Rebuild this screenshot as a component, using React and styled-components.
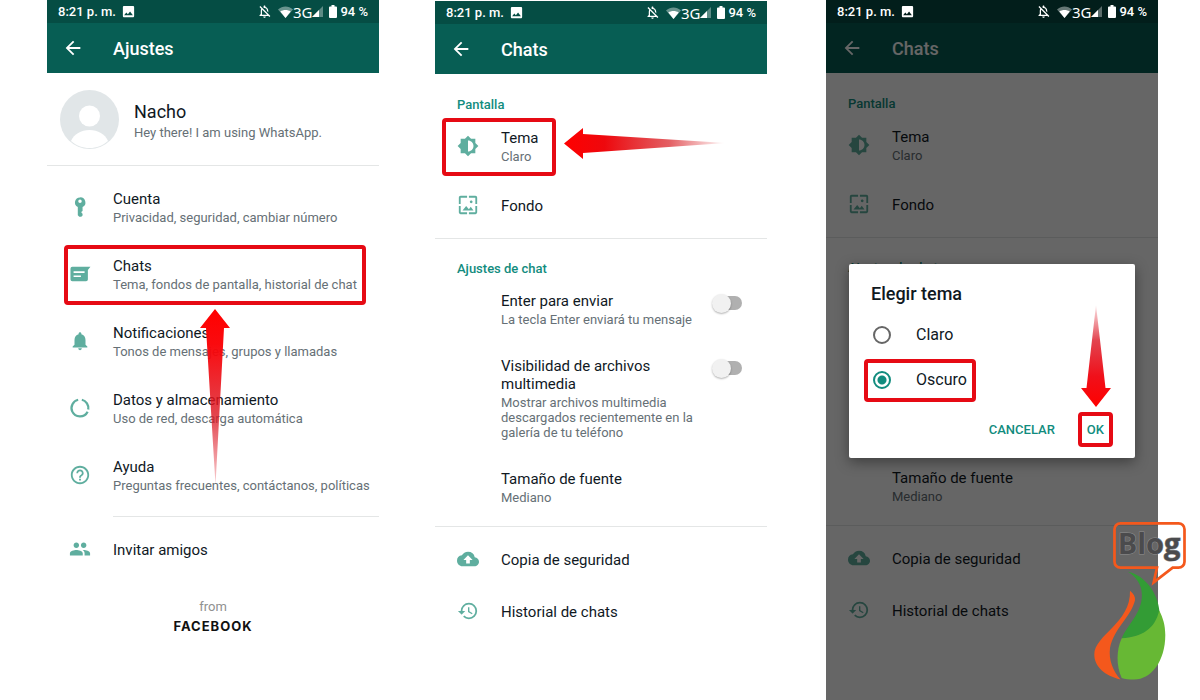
// React
import React, { useState } from 'react'

// Styled components
import styled, { createGlobalStyle, css } from 'styled-components'

// Icons
import {
  MdArrowBack,
  MdBackup,
  MdBrightness6,
  MdHelpOutline,
  MdHistory,
  MdImage,
  MdNotifications,
  MdOutlineNotificationsOff,
  MdPeople,
  MdWallpaper
} from 'react-icons/md'


const KeyIcon = () => (
  <svg viewBox="0 0 24 24" fill="currentColor">
    <path fillRule="evenodd" d="M12 1.500a5.600 5.600 0 0 0-2.400 10.600V21l1.600 1.700h2.200l1.400-1.400v-2l-1.200-1v-1l1.200-1v-4.200A5.600 5.600 0 0 0 12 1.500zm0 2.300a1.900 1.900 0 1 1 0 3.800 1.900 1.900 0 0 1 0-3.800z" />
  </svg>
)

const ChatIcon = () => (
  <svg viewBox="0 0 24 24" fill="currentColor">
    <path fillRule="evenodd" d="M3.600 4.200h19.800l-2.800 3.400V18a2 2 0 0 1-2 2H3.600a2 2 0 0 1-2-2V6.200a2 2 0 0 1 2-2zM5 9v1.800h12V9zM5 13.600v1.800h8v-1.800z" />
  </svg>
)

const DataIcon = () => (
  <svg viewBox="0 0 24 24" fill="none" stroke="currentColor" strokeWidth="2.500">
    <path d="M14 3a9.300 9.300 0 0 1 7 10.600M20.300 16a9.300 9.300 0 0 1-16.800-.3A9.300 9.300 0 0 1 10 3" />
  </svg>
)

const WifiIcon = () => (
  <svg width="15" height="12" viewBox="0 0 15 12" fill="#fff">
    <path opacity=".4" d="M0 3.500C4.500-.5 10.500-.5 15 3.500L7.500 12z" />
    <path d="M2.300 5.600c3.200-2 7.200-2 10.400 0L7.500 12z" />
  </svg>
)

const SignalIcon = () => (
  <svg width="11" height="11" viewBox="0 0 11 11" fill="#fff">
    <path opacity=".35" d="M11 0v11H0z" />
    <path d="M7 4v7H0z" />
  </svg>
)

const BatteryIcon = () => (
  <svg width="8" height="13" viewBox="0 0 8 13" fill="#fff">
    <path d="M2.500 0h3v1.500H7a1 1 0 0 1 1 1V12a1 1 0 0 1-1 1H1a1 1 0 0 1-1-1V2.500a1 1 0 0 1 1-1h1.500z" />
  </svg>
)

const PersonIcon = () => (
  <svg width="59" height="59" viewBox="0 0 59 59">
    <circle cx="29.500" cy="29.500" r="29.500" fill="#e1e6e8" />
    <circle cx="29.500" cy="26" r="10.500" fill="#fff" />
    <path d="M11 51c3-7 10-11 18.500-11S45 44 48 51c-5 4.500-11.500 7-18.500 7S16 55.500 11 51z" fill="#fff" />
  </svg>
)

const UpArrow = () => (
  <svg width="30" height="176" viewBox="0 0 30 176">
    <defs>
      <linearGradient id="fadeUp" x1="0" y1="0" x2="0" y2="1">
        <stop offset="0" stopColor="#f00" />
        <stop offset=".2" stopColor="#fa0307" stopOpacity=".97" />
        <stop offset=".6" stopColor="#dc1420" stopOpacity=".8" />
        <stop offset="1" stopColor="#dc1420" stopOpacity=".2" />
      </linearGradient>
    </defs>
    <path d="M15 0l15 19h-6l-8.500 157L6 19H0z" fill="url(#fadeUp)" />
  </svg>
)

const LeftArrow = () => (
  <svg width="162" height="31" viewBox="0 0 162 31">
    <defs>
      <linearGradient id="fadeLeft" x1="0" y1="0" x2="1" y2="0">
        <stop offset="0" stopColor="#f00" />
        <stop offset=".25" stopColor="#ee080d" />
        <stop offset=".65" stopColor="#d81a20" stopOpacity=".7" />
        <stop offset="1" stopColor="#d81a20" stopOpacity="0" />
      </linearGradient>
    </defs>
    <path d="M0 15.500L19 0v6l143 9L19 25v6z" fill="url(#fadeLeft)" />
  </svg>
)

const DownArrow = () => (
  <svg width="30" height="102" viewBox="0 0 30 102">
    <defs>
      <linearGradient id="fadeDown" x1="0" y1="1" x2="0" y2="0">
        <stop offset="0" stopColor="#f00" />
        <stop offset=".3" stopColor="#f0101a" />
        <stop offset=".65" stopColor="#dc1422" stopOpacity=".8" />
        <stop offset="1" stopColor="#dc1422" stopOpacity=".1" />
      </linearGradient>
    </defs>
    <path d="M15 102L0 83h5.500L15 0l9.500 83H30z" fill="url(#fadeDown)" />
  </svg>
)

const BlogLogo = () => (
  <svg width="96" height="162" viewBox="0 0 96 162">
    <path d="M28.500 3.300H86.500a6 6 0 0 1 6 6v32.400a6 6 0 0 1-6 6h-5.800L61.700 62.300l3.300-14.600H28.500a6 6 0 0 1-6-6V9.300a6 6 0 0 1 6-6z" fill="none" stroke="#f4581c" strokeWidth="2.700" />
    <BlogWord x="57" y="34" textAnchor="middle">Blog</BlogWord>
    <path d="M36 51.700C52 55 66 72 67.500 91.700 64 110 50 117 29.700 118.300 36 104 50 93 49.900 75 49.800 64 44 57 36 51.700z" fill="#339c35" />
    <path d="M67.200 90.500C71 98 73.300 105 73.300 115c0 26-14 44.500-31 44.500-5 0-9.500-.5-12.600-1.500-5.500-12-5.500-28 0-39.700C50 117 63 109 67.200 90.500z" fill="#67b834" />
    <path d="M38 70.700c3.500 3 5.500 6 5 9.500C39 97 22 108 18 128c-1.500 12 3 23 10.500 31.500C13 155.500 2.300 147 2.300 134.500 2.300 115 39 103 38 70.700z" fill="#f4581c" />
  </svg>
)


const StatusBar = () => (
  <Status>
    <StatusGroup>
      8:21 p. m.
      <MdImage size={15} />
    </StatusGroup>
    <StatusGroup $right>
      <MdOutlineNotificationsOff size={15} />
      <Network>
        <WifiIcon />
        3G
        <SignalIcon />
      </Network>
      <Battery>
        <BatteryIcon />
        94 %
      </Battery>
    </StatusGroup>
  </Status>
)

const Header = ({ title }) => (
  <AppBar>
    <BackButton type="button" aria-label="Atrás"><MdArrowBack size={22} /></BackButton>
    <AppTitle>{title}</AppTitle>
  </AppBar>
)

const Item = ({ icon, title, detail, children }) => (
  <Row>
    <RowButton type="button" $single={!detail}>
      <IconBox>{icon}</IconBox>
      <span>
        <Title>{title}</Title>
        {detail && <Detail>{detail}</Detail>}
      </span>
    </RowButton>
    {children}
  </Row>
)

const SwitchItem = ({ title, detail }) => {
  const [on, setOn] = useState(false)

  return (
    <SwitchRow>
      <span>
        <Title>{title}</Title>
        <Detail>{detail}</Detail>
      </span>
      <Switch type="checkbox" checked={on} onChange={() => setOn(!on)} />
    </SwitchRow>
  )
}

const SettingsScreen = () => (
  <Screen>
    <StatusBar />
    <Header title="Ajustes" />
    <Profile>
      <PersonIcon />
      <ProfileText>
        <Name>Nacho</Name>
        <Detail>Hey there! I am using WhatsApp.</Detail>
      </ProfileText>
    </Profile>
    <Divider />
    <List>
      <Item icon={<KeyIcon />} title="Cuenta" detail="Privacidad, seguridad, cambiar número" />
      <Item icon={<ChatIcon />} title="Chats" detail="Tema, fondos de pantalla, historial de chat">
        <RowMark />
        <UpPointer><UpArrow /></UpPointer>
      </Item>
      <Item icon={<MdNotifications />} title="Notificaciones" detail="Tonos de mensajes, grupos y llamadas" />
      <Item icon={<DataIcon />} title="Datos y almacenamiento" detail="Uso de red, descarga automática" />
      <Item icon={<MdHelpOutline />} title="Ayuda" detail="Preguntas frecuentes, contáctanos, políticas" />
    </List>
    <Divider $inset />
    <List $tight>
      <Item icon={<MdPeople />} title="Invitar amigos" />
    </List>
    <Footer>
      from
      <Brand>FACEBOOK</Brand>
    </Footer>
  </Screen>
)

const ChatsContent = ({ marked }) => (
  <Body>
    <Heading>Pantalla</Heading>
    <Item icon={<MdBrightness6 />} title="Tema" detail="Claro">
      {marked && <ThemeMark />}
      {marked && <LeftPointer><LeftArrow /></LeftPointer>}
    </Item>
    <Item icon={<MdWallpaper />} title="Fondo" />
    <Divider />
    <Heading>Ajustes de chat</Heading>
    <SwitchItem title="Enter para enviar" detail="La tecla Enter enviará tu mensaje" />
    <SwitchItem
      title="Visibilidad de archivos multimedia"
      detail="Mostrar archivos multimedia descargados recientemente en la galería de tu teléfono"
    />
    <TextButton type="button">
      <Title>Tamaño de fuente</Title>
      <Detail>Mediano</Detail>
    </TextButton>
    <Divider />
    <List $tight>
      <Item icon={<MdBackup />} title="Copia de seguridad" />
      <Item icon={<MdHistory />} title="Historial de chats" />
    </List>
  </Body>
)

const ThemeDialog = () => {
  const [theme, setTheme] = useState('Oscuro')

  return (
    <Dialog role="dialog" aria-label="Elegir tema">
      <DialogTitle>Elegir tema</DialogTitle>
      {['Claro', 'Oscuro'].map(name => (
        <Option key={name}>
          <Radio type="radio" name="theme" checked={theme === name} onChange={() => setTheme(name)} />
          {name}
          {name === 'Oscuro' && <OptionMark />}
        </Option>
      ))}
      <Actions>
        <ActionButton type="button">CANCELAR</ActionButton>
        <ActionButton type="button">
          OK
          <ButtonMark />
          <DownPointer><DownArrow /></DownPointer>
        </ActionButton>
      </Actions>
    </Dialog>
  )
}

const App = () => (
  <Page>
    <GlobalStyle />
    <SettingsScreen />
    <Screen $lowered>
      <StatusBar />
      <Header title="Chats" />
      <ChatsContent marked />
    </Screen>
    <Screen $last>
      <StatusBar />
      <Header title="Chats" />
      <ChatsContent />
      <Scrim />
      <ThemeDialog />
    </Screen>
    <Logo><BlogLogo /></Logo>
  </Page>
)

/* STYLE */
const GlobalStyle = createGlobalStyle`
  * {
    box-sizing: border-box;
  }

  body {
    margin: 0;
    background: #fff;
    color: #10191f;
    font-family: Roboto, "Liberation Sans", sans-serif;
  }

  button {
    border: 0;
    padding: 0;
    background: none;
    color: inherit;
    font-family: inherit;
    text-align: left;
    cursor: pointer;
  }

  svg {
    display: block;
    flex: none;
  }
`

const Page = styled.main`
  position: relative;
  display: flex;
  gap: 56px;
  min-height: 100vh;
  padding: 0 42px 0 47px;
`

const Screen = styled.section`
  position: relative;
  flex: 1 1 0;
  min-width: 0;
  padding-top: ${props => props.$lowered ? '1px' : '0'};
  margin-left: ${props => props.$last ? '3px' : '0'};
`

const Status = styled.div`
  display: flex;
  align-items: center;
  justify-content: space-between;
  height: 23px;
  padding: 0 11px;
  background: #054d44;
  color: #fff;
  font-size: 13px;
  font-weight: 500;

  /* the clock and icons stay bright above the scrim */
  & > * {
    position: relative;
    z-index: 2;
  }
`

const StatusGroup = styled.div`
  display: flex;
  align-items: center;
  gap: ${props => props.$right ? '6px' : '5px'};
`

const Network = styled.span`
  display: flex;
  align-items: center;
  font-family: "Noto Sans", sans-serif;
  font-size: 15px;
  font-weight: 400;
  line-height: 20px;
`

const Battery = styled.span`
  display: flex;
  align-items: center;
  gap: 3px;
`

const AppBar = styled.header`
  display: flex;
  align-items: center;
  gap: 29px;
  height: 50px;
  padding-left: 15px;
  background: #075e54;
  color: #fff;
`

const BackButton = styled.button`
  width: 22px;
`

const AppTitle = styled.h1`
  margin: 0;
  font-size: 18px;
  font-weight: 500;
`

const Profile = styled.div`
  display: flex;
  align-items: center;
  gap: 15px;
  height: 92px;
  padding-left: 13px;
`

const ProfileText = styled.div`
  padding-top: 3px;
`

const Name = styled.div`
  font-size: 18px;
  line-height: 22px;
`

const Divider = styled.hr`
  height: 1px;
  margin: ${props => props.$inset ? '7px 0 0 66px' : '6px 0 0'};
  border: 0;
  background: #e4e6e6;

  ${Profile} + & {
    margin-top: 0;
  }
`

const List = styled.div`
  padding-top: ${props => props.$tight ? '7px' : '8px'};
`

const Body = styled.div`
  padding-top: 1px;
`

const Heading = styled.h2`
  margin: 0;
  padding: 22px 22px 0;
  color: #128c7e;
  font-size: 13px;
  font-weight: 500;
  line-height: 16px;
`

const Row = styled.div`
  position: relative;
`

const RowButton = styled.button`
  display: flex;
  align-items: center;
  gap: 22px;
  width: 100%;
  height: ${props => props.$single ? '52px' : '67px'};
  padding-left: 22px;
`

const IconBox = styled.span`
  padding-bottom: 2px;
  color: #5fae9f;

  svg {
    width: 22px;
    height: 22px;
  }
`

const Title = styled.span`
  display: block;
  color: #10191f;
  font-size: 15px;
  line-height: 18px;
`

const Detail = styled.span`
  display: block;
  margin-top: 2px;
  color: #667076;
  font-size: 13px;
  line-height: 15px;
`

const SwitchRow = styled.label`
  display: flex;
  align-items: flex-start;
  justify-content: space-between;
  gap: 14px;
  padding: 15px 25px 15px 66px;
`

const TextButton = styled.button`
  display: block;
  width: 100%;
  padding: 15px 25px 15px 66px;
`

const Switch = styled.input`
  appearance: none;
  display: flex;
  flex: none;
  align-items: center;
  width: 30px;
  height: 14px;
  margin: 4px 0 0;
  border-radius: 7px;
  background: linear-gradient(to right, transparent 6px, #b0b0b0 6px);

  &::before {
    content: '';
    width: 19px;
    height: 19px;
    border-radius: 50%;
    background: #f1f1f1;
    box-shadow: 0 1px 2px rgba(0, 0, 0, .3);
  }

  &:checked {
    justify-content: flex-end;
    background: #84c9bf;
  }

  &:checked::before {
    background: #128c7e;
  }
`

const Footer = styled.footer`
  display: flex;
  flex-direction: column;
  align-items: center;
  gap: 1px;
  padding-top: 22px;
  color: #909090;
  font-size: 13px;
  line-height: 18px;
`

const Brand = styled.strong`
  color: #111;
  font-family: Inter, sans-serif;
  font-size: 13px;
  font-weight: 700;
  letter-spacing: 1px;
`

const mark = css`
  position: absolute;
  z-index: 1;
  border: 4px solid #e60a14;
  border-radius: 4px;
  pointer-events: none;
`

const RowMark = styled.span`
  ${mark}
  inset: 4px 13px 3px 17px;
`

const ThemeMark = styled.span`
  ${mark}
  top: 5px;
  left: 7px;
  width: 114px;
  height: 58px;
`

const OptionMark = styled.span`
  ${mark}
  inset: 2px -9px 0 -7px;
`

const ButtonMark = styled.span`
  ${mark}
  inset: 0;
`

const pointer = css`
  position: absolute;
  z-index: 1;
  pointer-events: none;
`

const UpPointer = styled.span`
  ${pointer}
  top: 68px;
  left: 153px;
`

const LeftPointer = styled.span`
  ${pointer}
  top: 15px;
  left: 129px;
`

const DownPointer = styled.span`
  ${pointer}
  bottom: 40px;
  left: 3px;
`

const Scrim = styled.div`
  position: absolute;
  inset: 0;
  z-index: 1;
  background: rgba(0, 0, 0, .6);
`

const Dialog = styled.div`
  position: absolute;
  z-index: 2;
  top: 264px;
  left: 23px;
  right: 23px;
  padding: 18px 22px 11px;
  border-radius: 2px;
  background: #fff;
  box-shadow: 0 4px 14px rgba(0, 0, 0, .4);
`

const DialogTitle = styled.h2`
  margin: 0 0 6px;
  font-size: 18px;
  font-weight: 500;
  line-height: 24px;
`

const Option = styled.label`
  position: relative;
  display: flex;
  align-items: center;
  gap: 25px;
  width: fit-content;
  height: 45px;
  padding-left: 2px;
  font-size: 16px;
`

const Radio = styled.input`
  appearance: none;
  width: 18px;
  height: 18px;
  margin: 0;
  border: 2px solid #666;
  border-radius: 50%;

  &:checked {
    border-color: #128c7e;
    background: radial-gradient(circle, #128c7e 4px, transparent 5px);
  }
`

const Actions = styled.div`
  display: flex;
  justify-content: flex-end;
  gap: 14px;
  margin-top: 10px;
`

const ActionButton = styled.button`
  position: relative;
  height: 35px;
  padding: 0 9px;
  color: #128c7e;
  font-size: 13px;
  font-weight: 500;
`

const Logo = styled.div`
  position: absolute;
  z-index: 3;
  right: 12px;
  bottom: 18px;
`

const BlogWord = styled.text`
  fill: #4b4b4d;
  stroke: #8f8f8f;
  stroke-width: 1px;
  paint-order: stroke;
  font-family: "Open Sans", sans-serif;
  font-size: 29px;
  font-weight: 700;
`

export default App
